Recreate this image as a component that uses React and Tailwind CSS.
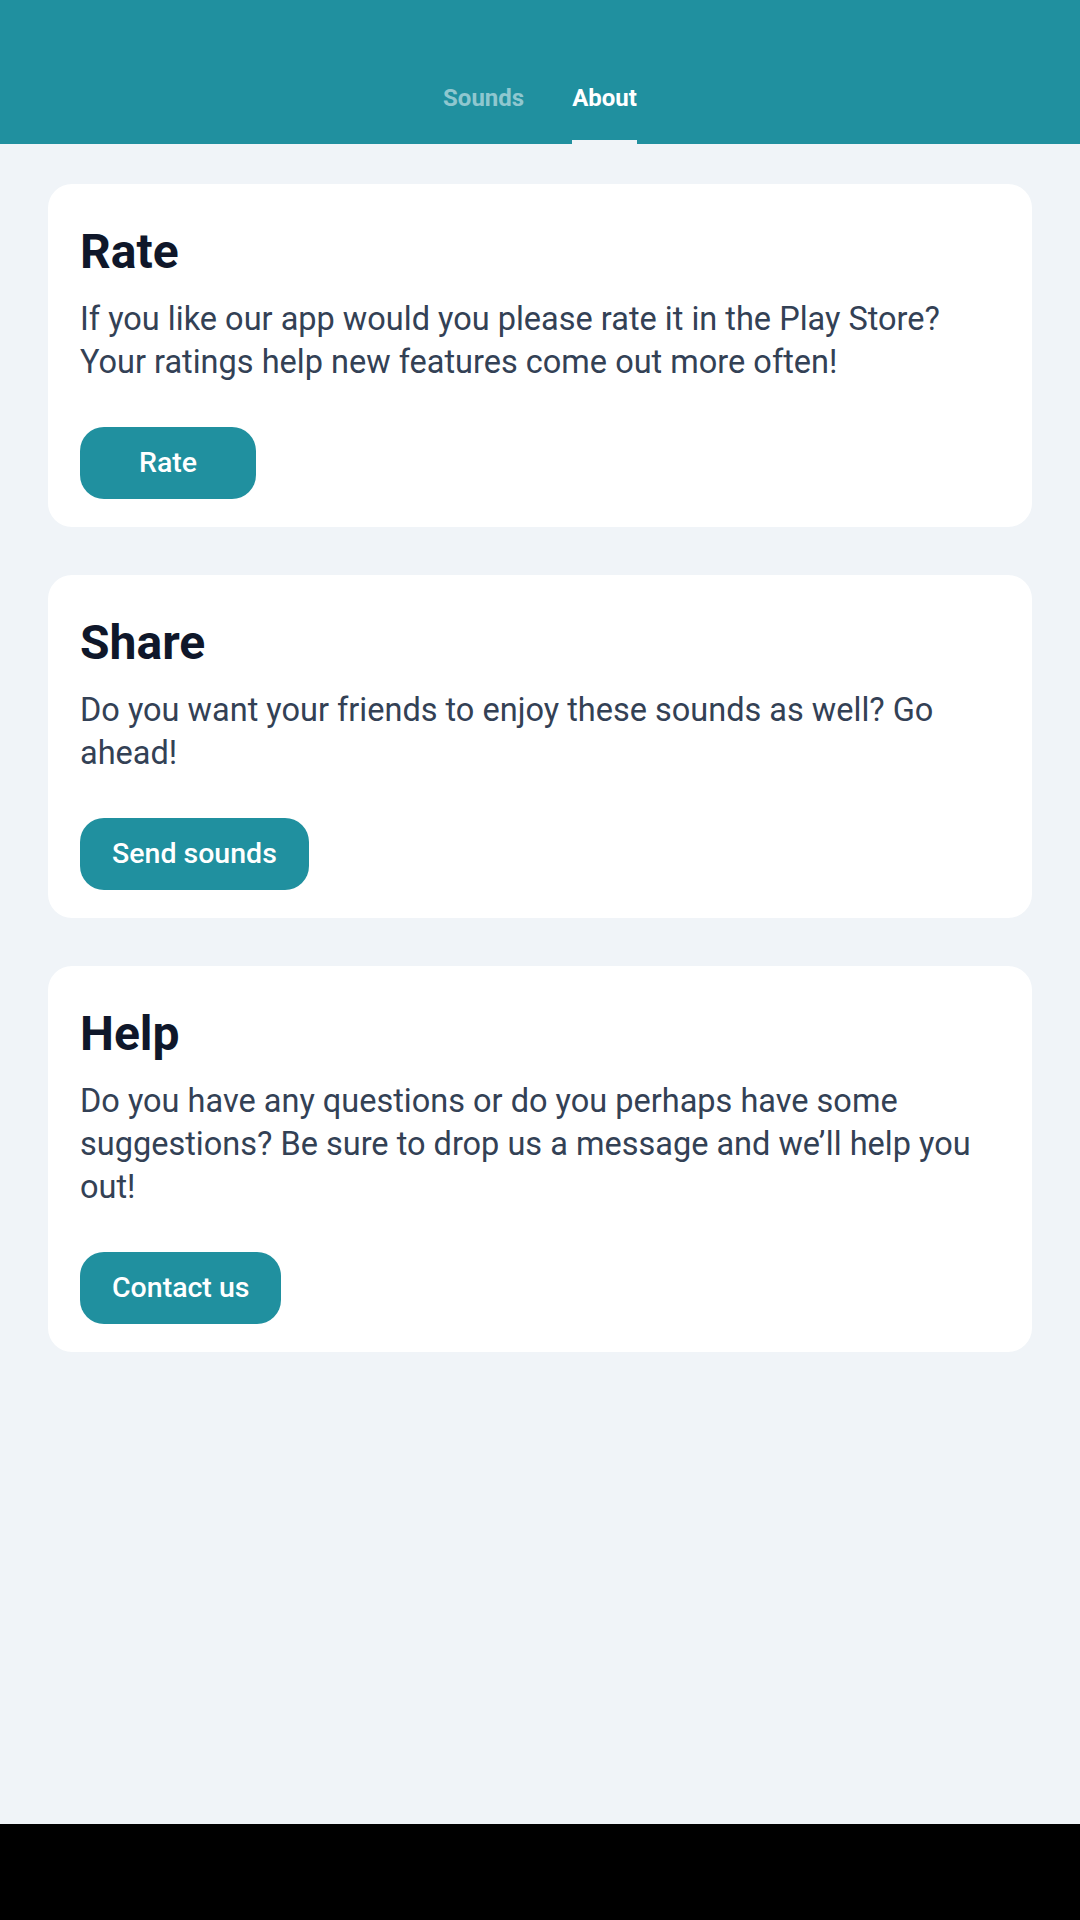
const cards = [
  {
    title: "Rate",
    text: "If you like our app would you please rate it in the Play Store? Your ratings help new features come out more often!",
    action: "Rate",
  },
  {
    title: "Share",
    text: "Do you want your friends to enjoy these sounds as well? Go ahead!",
    action: "Send sounds",
  },
  {
    title: "Help",
    text: "Do you have any questions or do you perhaps have some suggestions? Be sure to drop us a message and we\u2019ll help you out!",
    action: "Contact us",
  },
];

const tabs = [
  { label: "Sounds", active: false },
  { label: "About", active: true },
];

export default function App() {
  return (
    <div
      className="flex h-[1920px] w-full flex-col bg-[#f0f4f8]"
      style={{ fontFamily: "Roboto, 'Noto Sans', sans-serif" }}
    >
      <header className="flex h-[144px] shrink-0 items-end justify-center gap-12 bg-[#20909f]">
        {tabs.map((tab) => (
          <button key={tab.label} type="button" className="flex flex-col items-stretch">
            <span
              className={`text-[24px] font-bold leading-8 ${
                tab.active ? "text-white" : "text-white/50"
              }`}
            >
              {tab.label}
            </span>
            <span
              className={`mt-[26px] h-1 ${tab.active ? "bg-[#f0f4f8]" : "bg-transparent"}`}
            />
          </button>
        ))}
      </header>

      <main className="flex flex-1 flex-col gap-12 px-12 pt-10">
        {cards.map((card) => (
          <section key={card.title} className="rounded-3xl bg-white px-8 pb-7 pt-8">
            <h2 className="text-[48px] font-bold leading-[72px] text-[#0f172a]">
              {card.title}
            </h2>
            <p className="mt-[10px] text-[32.5px] leading-[43px] text-[#334155]">
              {card.text}
            </p>
            <button
              type="button"
              className="mt-[43px] flex h-[72px] min-w-[176px] items-center justify-center rounded-3xl bg-[#20909f] px-8 text-[28.5px] font-medium text-white"
            >
              {card.action}
            </button>
          </section>
        ))}
      </main>

      <div className="h-24 shrink-0 bg-black" />
    </div>
  );
}
